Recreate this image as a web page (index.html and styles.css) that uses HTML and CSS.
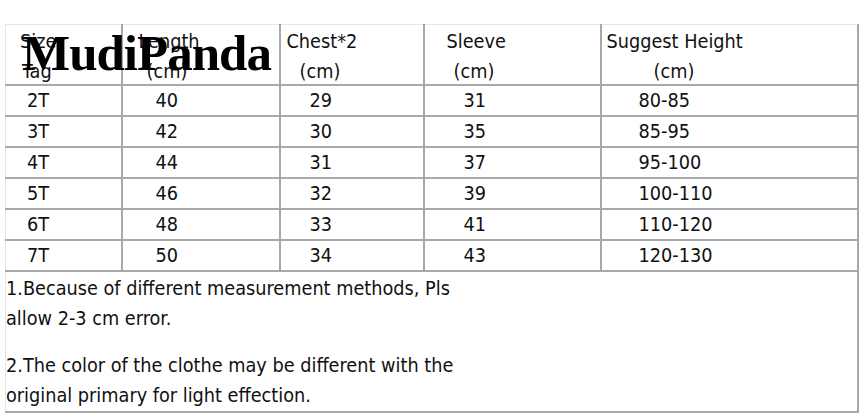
FILE: index.html
```html
<!DOCTYPE html>
<html>
<head>
<meta charset="utf-8">
<link rel="stylesheet" href="styles.css">
</head>
<body>
<div class="sheet">
  <table class="size-table">
    <colgroup>
      <col class="c1"><col class="c2"><col class="c3"><col class="c4"><col class="c5">
    </colgroup>
    <tr class="head">
      <td class="p1"><span class="l1">Size</span><br><span class="l2">Tag</span></td>
      <td class="p2"><span class="l1">Length</span><br><span class="l2">(cm)</span></td>
      <td class="p3"><span class="l1">Chest*2</span><br><span class="l2">(cm)</span></td>
      <td class="p4"><span class="l1">Sleeve</span><br><span class="l2">(cm)</span></td>
      <td class="p5"><span class="l1">Suggest Height</span><br><span class="l2">(cm)</span></td>
    </tr>
    <tr class="row"><td>2T</td><td>40</td><td>29</td><td>31</td><td>80-85</td></tr>
    <tr class="row"><td>3T</td><td>42</td><td>30</td><td>35</td><td>85-95</td></tr>
    <tr class="row"><td>4T</td><td>44</td><td>31</td><td>37</td><td>95-100</td></tr>
    <tr class="row"><td>5T</td><td>46</td><td>32</td><td>39</td><td>100-110</td></tr>
    <tr class="row"><td>6T</td><td>48</td><td>33</td><td>41</td><td>110-120</td></tr>
    <tr class="row"><td>7T</td><td>50</td><td>34</td><td>43</td><td>120-130</td></tr>
    <tr class="notes">
      <td colspan="5">
        <p>1.Because of different measurement methods, Pls<br>allow 2-3 cm error.</p>
        <p>2.The color of the clothe may be different with the<br>original primary for light effection.</p>
      </td>
    </tr>
  </table>
  <div class="watermark">MudiPanda</div>
</div>
</body>
</html>
```
FILE: styles.css
```css
html, body {
  margin: 0;
  padding: 0;
  background: #ffffff;
}
.sheet {
  position: relative;
  padding: 24px 0 0 5px;
}
.size-table {
  border-collapse: collapse;
  table-layout: fixed;
  width: 852px;
  font-family: "DejaVu Sans Condensed", "DejaVu Sans", sans-serif;
  font-stretch: condensed;
  font-size: 19.7px;
  color: #111;
  border-top: 1px solid #e6e6e6;
  border-left: 1px solid #e6e6e6;
  border-right: 2px solid #a3a3a3;
  border-bottom: 2px solid #a3a3a3;
}
.c1 { width: 116px; }
.c2 { width: 158px; }
.c3 { width: 144px; }
.c4 { width: 177px; }
.c5 { width: 257px; }
.size-table td {
  padding: 0;
  vertical-align: middle;
  white-space: nowrap;
  border-right: 2px solid #a8a8a8;
  border-bottom: 2px solid #a8a8a8;
}
.head td {
  height: 50px;
  line-height: 29px;
  vertical-align: top;
  padding-top: 1px;
}
.p1 { padding-left: 14px !important; }
.p1 .l2 { margin-left: 2px; }
.p2 { padding-left: 16px !important; }
.p2 .l2 { margin-left: 8px; }
.p3 { padding-left: 6px !important; }
.p3 .l2 { margin-left: 13px; }
.p4 { padding-left: 22px !important; }
.p4 .l2 { margin-left: 7px; }
.p5 { padding-left: 5px !important; }
.p5 .l2 { margin-left: 47px; }
.head .l1 {
  position: relative;
  top: 1px;
}
.head .l2 {
  position: relative;
  top: 2px;
}
.row td {
  height: 29px;
  line-height: 29px;
}
.row td:nth-child(1) { padding-left: 21px; }
.row td:nth-child(2) { padding-left: 33px; }
.row td:nth-child(3) { padding-left: 29px; }
.row td:nth-child(4) { padding-left: 39px; }
.row td:nth-child(5) { padding-left: 37px; }
.notes td {
  height: 130px;
  vertical-align: top;
  padding-top: 2px;
}
.notes p {
  margin: 0 0 17px 0;
  line-height: 30px;
  white-space: nowrap;
}
.notes p:last-child { margin-bottom: 0; }
.watermark {
  position: absolute;
  left: 22px;
  top: 28px;
  font-family: "Liberation Serif", serif;
  font-weight: bold;
  font-size: 51px;
  line-height: 51px;
  color: #000;
  letter-spacing: -1px;
}
```
